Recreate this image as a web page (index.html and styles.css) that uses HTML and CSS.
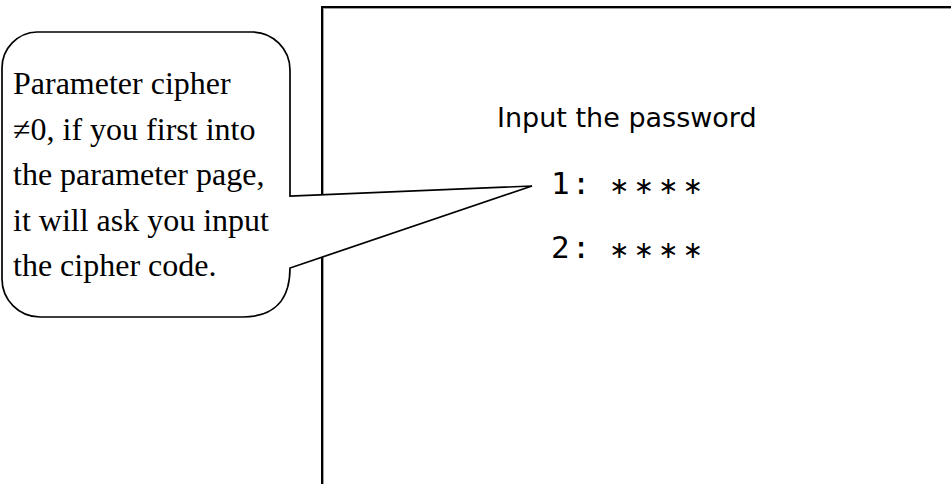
FILE: index.html
```html
<!DOCTYPE html>
<html lang="en">
<head>
    <meta charset="UTF-8">
    <title>Input the password</title>
    <link rel="stylesheet" href="styles.css">
</head>
<body>
    <div class="stage">
        <section class="screen">
            <p class="prompt">Input the password</p>
            <div class="pw-row"><span class="pw-no">1:</span><span class="pw-mask">∗∗∗∗</span></div>
            <div class="pw-row"><span class="pw-no">2:</span><span class="pw-mask">∗∗∗∗</span></div>
        </section>

        <!-- callout pointing at the password rows -->
        <div class="callout">
            <svg class="callout-shape" width="540" height="322" viewBox="0 0 540 322">
                <path d="M37 32 H252 A38 38 0 0 1 290 70 V196 L532 186 L290 268 C290 300 274 317 243 317 H40 A38 38 0 0 1 2 279 V68 A36 36 0 0 1 37 32 Z"
                      fill="#fff" stroke="#000" stroke-width="1.7" stroke-linejoin="miter"/>
            </svg>
            <p class="callout-text">Parameter cipher<br>≠0, if you first into<br>the parameter page,<br>it will ask you input<br>the cipher code.</p>
        </div>
    </div>
</body>
</html>
```

FILE: styles.css
```css
body {
    margin: 0;
    background: #fff;
}
.stage {
    position: relative;
    width: 951px;
    height: 484px;
    padding: 6px 0 0 321px;
    box-sizing: border-box;
    overflow: hidden;
}
.screen {
    height: 500px;
    border-top: 2px solid #000;
    border-left: 2px solid #000;
    box-shadow: inset 1px 1px 0 #a0a0a0;
    padding: 94px 0 0 174px;
    box-sizing: border-box;
}
.prompt {
    margin: 0 0 17px;
    font-family: "DejaVu Sans", sans-serif;
    font-size: 27px;
    line-height: 32px;
    color: #000;
}
.pw-row {
    display: flex;
    align-items: baseline;
    margin-left: 54px;
    height: 64px;
    line-height: 64px;
}
.pw-no {
    font-family: "DejaVu Sans Mono", monospace;
    font-size: 31px;
    letter-spacing: 2px;
}
.pw-mask {
    margin-left: 17px;
    font-family: "DejaVu Sans", sans-serif;
    font-size: 24px;
    letter-spacing: 4.4px;
}
.callout {
    position: absolute;
    left: 0;
    top: 0;
}
.callout-shape {
    display: block;
}
.callout-text {
    position: absolute;
    left: 13px;
    top: 61px;
    margin: 0;
    font-family: "Liberation Serif", serif;
    font-size: 32px;
    line-height: 45.5px;
    color: #000;
    white-space: nowrap;
}
```
